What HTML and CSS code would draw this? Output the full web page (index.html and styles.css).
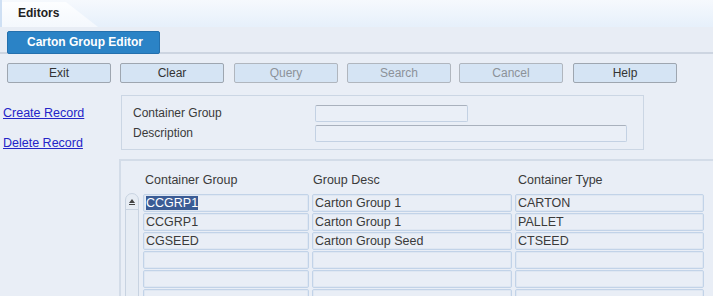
FILE: index.html
```html
<!DOCTYPE html>
<html lang="en">
<head>
    <meta charset="UTF-8">
    <title>Carton Group Editor</title>
    <link rel="stylesheet" href="styles.css">
</head>
<body>
    <div class="tabbar">
        <div class="tab">Editors</div>
    </div>

    <div class="titlebar">
        <div class="title-btn">Carton Group Editor</div>
    </div>

    <div class="toolbar">
        <button>Exit</button>
        <button>Clear</button>
        <button disabled>Query</button>
        <button disabled>Search</button>
        <button disabled>Cancel</button>
        <button>Help</button>
    </div>

    <div class="content">
        <div class="links">
            <a href="#">Create Record</a>
            <a href="#">Delete Record</a>
        </div>
        <div class="search-panel">
            <div class="form-row">
                <label>Container Group</label>
                <input type="text" class="short">
            </div>
            <div class="form-row">
                <label>Description</label>
                <input type="text" class="long">
            </div>
        </div>
    </div>

    <div class="results">
        <div class="grid-head">
            <span class="c1">Container Group</span>
            <span class="c2">Group Desc</span>
            <span class="c3">Container Type</span>
        </div>
        <div class="grid-body">
            <div class="scroll">
                <div class="scroll-up"></div>
            </div>
            <div class="rows">
                <div class="row">
                    <div class="cell c1"><span class="sel">CCGRP1</span></div>
                    <div class="cell c2">Carton Group 1</div>
                    <div class="cell c3">CARTON</div>
                </div>
                <div class="row">
                    <div class="cell c1">CCGRP1</div>
                    <div class="cell c2">Carton Group 1</div>
                    <div class="cell c3">PALLET</div>
                </div>
                <div class="row">
                    <div class="cell c1">CGSEED</div>
                    <div class="cell c2">Carton Group Seed</div>
                    <div class="cell c3">CTSEED</div>
                </div>
                <div class="row">
                    <div class="cell c1"></div>
                    <div class="cell c2"></div>
                    <div class="cell c3"></div>
                </div>
                <div class="row">
                    <div class="cell c1"></div>
                    <div class="cell c2"></div>
                    <div class="cell c3"></div>
                </div>
                <div class="row">
                    <div class="cell c1"></div>
                    <div class="cell c2"></div>
                    <div class="cell c3"></div>
                </div>
            </div>
        </div>
    </div>
</body>
</html>
```

FILE: styles.css
```css
body {
    margin: 0;
    font-family: "Liberation Sans", Arial, sans-serif;
    font-size: 12px;
    color: #3a3a3a;
    background-color: #e9eef6;
    overflow: hidden;
    height: 296px;
}
.tabbar {
    height: 27px;
    background: linear-gradient(#f6f9fd, #e6f0fb);
    border-left: 2px solid #cfe0f4;
    position: relative;
}
.tab {
    position: absolute;
    left: 0;
    top: 2px;
    width: 96px;
    height: 25px;
    background: linear-gradient(#fdfeff, #f4f8fd);
    clip-path: polygon(0 0, 64px 0, 96px 100%, 0 100%);
    font-weight: bold;
    color: #222;
    line-height: 22px;
    padding-left: 16px;
    box-sizing: border-box;
}
.titlebar {
    height: 27px;
    background-color: #e8edf5;
    border-bottom: 2px solid #cdd5e1;
    padding: 4px 0 0 7px;
    box-sizing: border-box;
}
.title-btn {
    width: 153px;
    height: 23px;
    box-sizing: border-box;
    background-color: #2b83c6;
    border: 1px solid #2470ad;
    border-radius: 2px;
    color: #fff;
    font-weight: bold;
    line-height: 20px;
    padding-left: 19px;
}
.toolbar {
    display: flex;
    padding: 9px 0 0 7px;
    height: 34px;
    box-sizing: border-box;
}
.toolbar button {
    width: 104px;
    height: 20px;
    margin-right: 9px;
    background-color: #d5e4f4;
    border: 1px solid #9ea6b0;
    border-radius: 2px;
    font-family: inherit;
    font-size: 12px;
    color: #333;
    padding: 0;
}
.toolbar button:nth-child(2),
.toolbar button:nth-child(5) {
    margin-right: 10px;
}
.toolbar button:nth-child(4) {
    margin-right: 8px;
}
.toolbar button:disabled {
    color: #8c9299;
    border-color: #b0b6be;
}
.content {
    display: flex;
    padding-top: 7px;
    height: 64px;
}
.links {
    width: 121px;
    display: flex;
    flex-direction: column;
    padding: 11px 0 0 3px;
    gap: 15px;
    box-sizing: border-box;
}
.links a {
    color: #2424c8;
    text-decoration: underline;
    line-height: 15px;
    font-size: 12.5px;
}
.search-panel {
    width: 523px;
    height: 55px;
    box-sizing: border-box;
    border: 1px solid #cbd6e4;
    padding: 7px 0 0 11px;
}
.form-row {
    display: flex;
    align-items: center;
    height: 20px;
}
.form-row label {
    width: 182px;
}
.form-row input {
    height: 17px;
    box-sizing: border-box;
    background-color: #eaeff7;
    border: 1px solid #c3d1e3;
    border-top-color: #a9b1bd;
    border-radius: 2px;
    padding: 0;
}
.form-row input.short {
    width: 153px;
}
.form-row input.long {
    width: 312px;
}
.results {
    margin-left: 119px;
    border-top: 2px solid #d3dce8;
    border-left: 2px solid #d3dce8;
    height: 140px;
}
.grid-head {
    display: flex;
    height: 31px;
    align-items: flex-end;
    padding-bottom: 5px;
    box-sizing: border-box;
    padding-left: 24px;
}
.grid-head span {
    display: block;
    line-height: 14px;
    font-size: 12.5px;
}
.grid-head .c1 { width: 168px; }
.grid-head .c2 { width: 205px; }
.grid-body {
    display: flex;
    padding-left: 4px;
    padding-top: 1px;
}
.scroll {
    width: 14px;
    height: 110px;
    border: 1px solid #c8d3e1;
    border-radius: 7px 7px 0 0;
    background-color: #e6ecf4;
    box-sizing: border-box;
}
.scroll-up {
    height: 15px;
    border-bottom: 1px solid #c8d3e1;
    position: relative;
}
.scroll-up::after {
    content: "";
    position: absolute;
    left: 3px;
    top: 5px;
    border-left: 3px solid transparent;
    border-right: 3px solid transparent;
    border-bottom: 4px solid #444;
}
.scroll-up::before {
    content: "";
    position: absolute;
    left: 3px;
    top: 10px;
    width: 6px;
    height: 1px;
    background-color: #444;
}
.rows {
    display: flex;
    flex-direction: column;
    gap: 1px;
    margin-left: 4px;
    padding-top: 1px;
}
.row {
    display: flex;
    gap: 3px;
}
.cell {
    height: 18px;
    box-sizing: border-box;
    border: 1px solid #c2d3e8;
    border-radius: 2px;
    box-shadow: inset 0 0 0 1px #dfe7f2;
    background-color: #e9eef6;
    padding-left: 2px;
    line-height: 16px;
    font-size: 12.5px;
    white-space: nowrap;
}
.cell.c1 { width: 166px; }
.cell.c2 { width: 200px; }
.cell.c3 { width: 189px; }
.sel {
    background-color: #3b5c95;
    color: #fff;
}
```
